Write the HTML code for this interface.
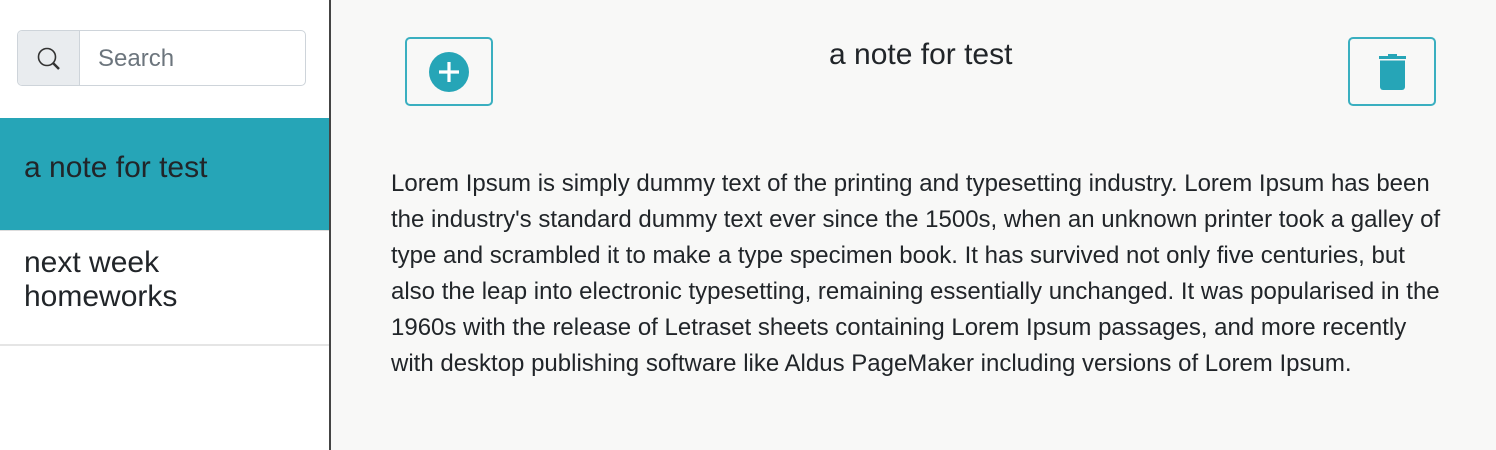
<!DOCTYPE html>
<html><head><style>
*{box-sizing:border-box;margin:0;padding:0}
body{width:1496px;height:450px;overflow:hidden;font-family:"Liberation Sans",sans-serif;background:#f8f8f7;color:#212529;position:relative}
.side{position:absolute;left:0;top:0;width:331px;height:450px;background:#fff;border-right:2px solid #444}
.search{position:absolute;left:17px;top:30px;width:289px;height:56px;border:1px solid #ced4da;border-radius:5px;overflow:hidden;background:#fff}
.search .ic{position:absolute;left:0;top:0;width:62px;height:100%;background:#e9ecef;border-right:1px solid #ced4da}
.search span{position:absolute;left:80px;top:14px;font-size:24px;color:#6c757d}
.item{position:absolute;left:0;width:329px;font-size:30px;padding-left:24px;line-height:34px}
.a{top:118px;height:113px;background:#26a5b7;padding-top:33px;border-bottom:1px solid #ddd}
.b{top:231px;height:115px;border-bottom:2px solid #e5e5e5;padding-top:15px}
.btn{position:absolute;top:37px;width:88px;height:69px;border:2px solid #3aafc0;border-radius:5px}
h1{position:absolute;left:829px;top:38px;font-weight:normal;font-size:30px}
p{position:absolute;left:391px;top:166px;width:1062px;font-size:24px;line-height:36px;color:#212529}
</style></head><body>
<div class="side">
<div class="search"><div class="ic"><svg width="62" height="56" viewBox="0 0 62 56"><circle cx="29" cy="26" r="8.5" fill="none" stroke="#333" stroke-width="1.6"/><line x1="35" y1="32" x2="41" y2="38" stroke="#333" stroke-width="2.5"/></svg></div><span>Search</span></div>
<div class="item a">a note for test</div>
<div class="item b">next week<br>homeworks</div>
</div>
<div class="btn" style="left:405px"><svg width="84" height="65" viewBox="0 0 84 65"><circle cx="42" cy="33" r="20" fill="#26a5b7"/><path d="M42 23v20M32 33h20" stroke="#fff" stroke-width="3.2"/></svg></div>
<h1>a note for test</h1>
<div class="btn" style="left:1348px"><svg width="84" height="65" viewBox="0 0 84 65"><path d="M29 17h27v3H29z M38 15h9v3h-9z" fill="#26a5b7"/><path d="M30 21.5h25V48a3 3 0 0 1-3 3H33a3 3 0 0 1-3-3z" fill="#26a5b7"/></svg></div>
<p>Lorem Ipsum is simply dummy text of the printing and typesetting industry. Lorem Ipsum has been the industry's standard dummy text ever since the 1500s, when an unknown printer took a galley of type and scrambled it to make a type specimen book. It has survived not only five centuries, but also the leap into electronic typesetting, remaining essentially unchanged. It was popularised in the 1960s with the release of Letraset sheets containing Lorem Ipsum passages, and more recently with desktop publishing software like Aldus PageMaker including versions of Lorem Ipsum.</p>
</body></html>
